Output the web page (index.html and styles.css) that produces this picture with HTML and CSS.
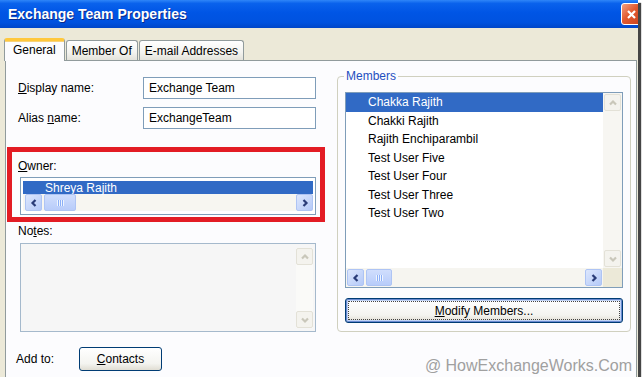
FILE: index.html
```html
<!DOCTYPE html>
<html lang="en">
<head>
    <meta charset="UTF-8">
    <title>Exchange Team Properties</title>
    <link rel="stylesheet" href="styles.css">
</head>
<body>
    <div class="window">
        <div class="titlebar">
            <span class="title">Exchange Team Properties</span>
            <span class="close-btn">
                <svg viewBox="0 0 13 13"><path d="M3 3 L10 10 M10 3 L3 10"/></svg>
            </span>
        </div>

        <div class="tabs">
            <div class="tab active">General</div>
            <div class="tab">Member Of</div>
            <div class="tab">E-mail Addresses</div>
        </div>

        <div class="panel">
            <div class="left-col">
                <div class="field-row">
                    <label><u>D</u>isplay name:</label>
                    <div class="textbox">Exchange Team</div>
                </div>
                <div class="field-row">
                    <label>Alias <u>n</u>ame:</label>
                    <div class="textbox">ExchangeTeam</div>
                </div>

                <!-- red highlight drawn around the owner field -->
                <div class="owner-box">
                    <div class="label"><u>O</u>wner:</div>
                    <div class="owner-list">
                        <div class="owner-row">Shreya Rajith</div>
                        <div class="hscroll">
                            <span class="sb-btn"><svg viewBox="0 0 8 8"><path d="M5.5 1 L2.5 4 L5.5 7"/></svg></span>
                            <span class="sb-thumb owner-thumb"><span class="grip"></span></span>
                            <span class="sb-btn push"><svg viewBox="0 0 8 8"><path d="M2.5 1 L5.5 4 L2.5 7"/></svg></span>
                        </div>
                    </div>
                </div>

                <div class="label notes-label">No<u>t</u>es:</div>
                <div class="notes">
                    <div class="vscroll">
                        <span class="sb-btn off"><svg viewBox="0 0 8 8"><path d="M1 5.5 L4 2.5 L7 5.5"/></svg></span>
                        <span class="sb-btn off"><svg viewBox="0 0 8 8"><path d="M1 2.5 L4 5.5 L7 2.5"/></svg></span>
                    </div>
                </div>

                <div class="add-row">
                    <span class="add-label">Add to:</span>
                    <button class="btn contacts-btn"><u>C</u>ontacts</button>
                </div>
            </div>

            <fieldset class="members">
                <legend>Members</legend>
                <div class="members-list">
                    <div class="items">
                        <div class="member selected">Chakka Rajith</div>
                        <div class="member">Chakki Rajith</div>
                        <div class="member">Rajith Enchiparambil</div>
                        <div class="member">Test User Five</div>
                        <div class="member">Test User Four</div>
                        <div class="member">Test User Three</div>
                        <div class="member">Test User Two</div>
                    </div>
                    <div class="vscroll light">
                        <span class="sb-btn off"><svg viewBox="0 0 8 8"><path d="M1 5.5 L4 2.5 L7 5.5"/></svg></span>
                        <span class="sb-btn off"><svg viewBox="0 0 8 8"><path d="M1 2.5 L4 5.5 L7 2.5"/></svg></span>
                    </div>
                    <div class="hscroll track">
                        <span class="sb-btn"><svg viewBox="0 0 8 8"><path d="M5.5 1 L2.5 4 L5.5 7"/></svg></span>
                        <span class="sb-thumb member-thumb"><span class="grip"></span></span>
                        <span class="sb-btn push"><svg viewBox="0 0 8 8"><path d="M2.5 1 L5.5 4 L2.5 7"/></svg></span>
                    </div>
                    <div class="corner"></div>
                </div>
                <button class="btn modify-btn"><span class="focus-ring"><u>M</u>odify Members...</span></button>
            </fieldset>
        </div>

        <div class="watermark">@ HowExchangeWorks.Com</div>
    </div>
</body>
</html>
```

FILE: styles.css
```css
body {
    margin: 0;
    background: #fff;
    font-family: "Liberation Sans", Arial, sans-serif;
    font-size: 12px;
    color: #000;
}
.window {
    position: relative;
    width: 638px;
    height: 377px;
    background: #ece9d8;
    overflow: hidden;
    display: flex;
    flex-direction: column;
    box-shadow: 3px 3px 1px #454545;
}
.titlebar {
    height: 28px;
    flex: none;
    display: flex;
    align-items: center;
    padding-left: 8px;
    background: linear-gradient(#2f86f8 0%, #0a62ec 12%, #0055e5 45%, #0052df 80%, #0046c8 100%);
}
.title {
    color: #fff;
    font-weight: bold;
    font-size: 14px;
    text-shadow: 1px 1px 0 #0b2a8a;
}
.close-btn {
    margin-left: auto;
    margin-right: -4px;
    width: 21px;
    height: 22px;
    box-sizing: border-box;
    border: 1px solid #fff;
    border-radius: 3px;
    background: linear-gradient(135deg, #f2a184, #e25a30 45%, #c9421c);
    display: flex;
    align-items: center;
    justify-content: center;
}
.close-btn svg {
    width: 13px;
    height: 13px;
    stroke: #fff;
    stroke-width: 2.2;
}
.tabs {
    position: relative;
    z-index: 1;
    display: flex;
    align-items: flex-end;
    gap: 1px;
    height: 22px;
    margin: 10px 0 0 4px;
}
.tab {
    height: 20px;
    box-sizing: border-box;
    padding: 2px 5px 0;
    line-height: 17px;
    border: 1px solid #919b9c;
    border-bottom: none;
    border-radius: 3px 3px 0 0;
    background: linear-gradient(#fff, #f3f3ef 60%, #e3e2da);
}
.tab.active {
    height: 23px;
    margin-bottom: -1px;
    padding: 0 8px;
    line-height: 18px;
    border-top: 3px solid #ffc83c;
    background: #fcfcfe;
    box-shadow: inset 0 1px 0 #f7d27a;
}
.panel {
    flex: 1;
    display: flex;
    align-items: flex-start;
    gap: 12px;
    margin: 0 1px -4px 5px;
    padding: 8px 0 0 1px;
    border: 1px solid #919b9c;
    background: #fcfcfe;
}
.left-col {
    width: 318px;
    padding-top: 8px;
}
.field-row {
    display: flex;
    align-items: center;
    height: 22px;
    padding-left: 11px;
}
.field-row + .field-row {
    margin-top: 8px;
}
.field-row label {
    width: 125px;
}
.textbox {
    width: 173px;
    height: 22px;
    box-sizing: border-box;
    padding-left: 5px;
    line-height: 20px;
    border: 1px solid #7f9db9;
    background: #fff;
}
.label {
    line-height: 14px;
}
.owner-box {
    height: 75px;
    box-sizing: border-box;
    margin-top: 18px;
    padding: 7px 4px 0 6px;
    border: 5px solid #e31c24;
}
.owner-list {
    width: 296px;
    height: 38px;
    box-sizing: border-box;
    margin: 4px 0 0 2px;
    padding: 3px 2px;
    border: 1px solid #7f9db9;
    background: #fff;
}
.owner-row {
    height: 13px;
    line-height: 14px;
    padding-left: 22px;
    background: #316ac5;
    color: #fff;
}
.hscroll {
    display: flex;
    align-items: center;
    height: 17px;
    padding-left: 2px;
    background: #f7f6f1;
}
.sb-btn {
    flex: none;
    width: 17px;
    height: 17px;
    box-sizing: border-box;
    display: flex;
    align-items: center;
    justify-content: center;
    border: 1px solid #aec4f4;
    border-radius: 2px;
    background: linear-gradient(135deg, #dde7fd, #b4c9f8);
}
.sb-btn svg {
    width: 8px;
    height: 8px;
    fill: none;
    stroke: #2a3c78;
    stroke-width: 2.2;
}
.sb-btn.off {
    border-color: #e3e1d7;
    background: #f4f3ee;
}
.sb-btn.off svg {
    stroke: #c9c7ba;
}
.sb-btn.push {
    margin-left: auto;
}
.sb-thumb {
    flex: none;
    height: 17px;
    box-sizing: border-box;
    margin-left: 2px;
    display: flex;
    align-items: center;
    justify-content: center;
    border: 1px solid #aec4f4;
    border-radius: 2px;
    background: linear-gradient(#d0defd, #b8ccfa);
}
.owner-thumb {
    width: 32px;
}
.member-thumb {
    width: 26px;
}
.grip {
    width: 7px;
    height: 6px;
    background: repeating-linear-gradient(to right, #eef4fe 0 1px, #8cb0f8 1px 2px);
}
.notes-label {
    margin-top: 2px;
    padding-left: 11px;
}
.notes {
    width: 296px;
    height: 89px;
    box-sizing: border-box;
    margin: 5px 0 0 13px;
    display: flex;
    justify-content: flex-end;
    border: 1px solid #a5b9cc;
    background: #f6f6f6;
}
.vscroll {
    display: flex;
    flex-direction: column;
    justify-content: space-between;
}
.notes .vscroll {
    width: 17px;
    margin: 4px 2px 3px 0;
    background: #fafaf8;
}
.add-row {
    display: flex;
    align-items: center;
    margin-top: 15px;
    padding-left: 9px;
}
.add-label {
    width: 63px;
}
.btn {
    font: inherit;
    color: #000;
    padding: 0;
    border: 1px solid #003c74;
    border-radius: 3px;
    background: linear-gradient(#fff, #f4f4f0 70%, #e0ddd3);
}
.contacts-btn {
    width: 83px;
    height: 24px;
}
.members {
    width: 294px;
    box-sizing: border-box;
    margin: 0;
    padding: 9px 7px 8px;
    border: 1px solid #d0d0bf;
    border-radius: 4px;
}
.members legend {
    margin-left: -1px;
    padding: 0 2px;
    line-height: 14px;
    color: #1f4fbf;
}
.members-list {
    height: 196px;
    box-sizing: border-box;
    display: grid;
    grid-template-columns: 1fr 19px;
    grid-template-rows: 1fr 19px;
    border: 1px solid #7f9db9;
    background: #fff;
}
.member {
    height: 18.5px;
    line-height: 18.5px;
    padding-left: 22px;
}
.member.selected {
    background: #316ac5;
    color: #fff;
}
.members-list .vscroll {
    padding: 1px;
    background: #f7f6f2;
}
.members-list .hscroll {
    height: 19px;
    padding: 0 1px;
    background: #f6f5f0;
}
.corner {
    background: #ece9d8;
}
.modify-btn {
    width: 278px;
    height: 25px;
    box-sizing: border-box;
    margin-top: 10px;
    padding: 2px;
    box-shadow: inset 0 0 0 1px #6a8ad0, inset 0 0 0 2px #c2d4f5;
}
.focus-ring {
    height: 100%;
    box-sizing: border-box;
    display: flex;
    align-items: center;
    justify-content: center;
    border: 1px dotted #444;
}
.watermark {
    position: absolute;
    right: 6px;
    top: 357px;
    font-size: 16px;
    line-height: 18px;
    color: #a0a0a0;
}
```
